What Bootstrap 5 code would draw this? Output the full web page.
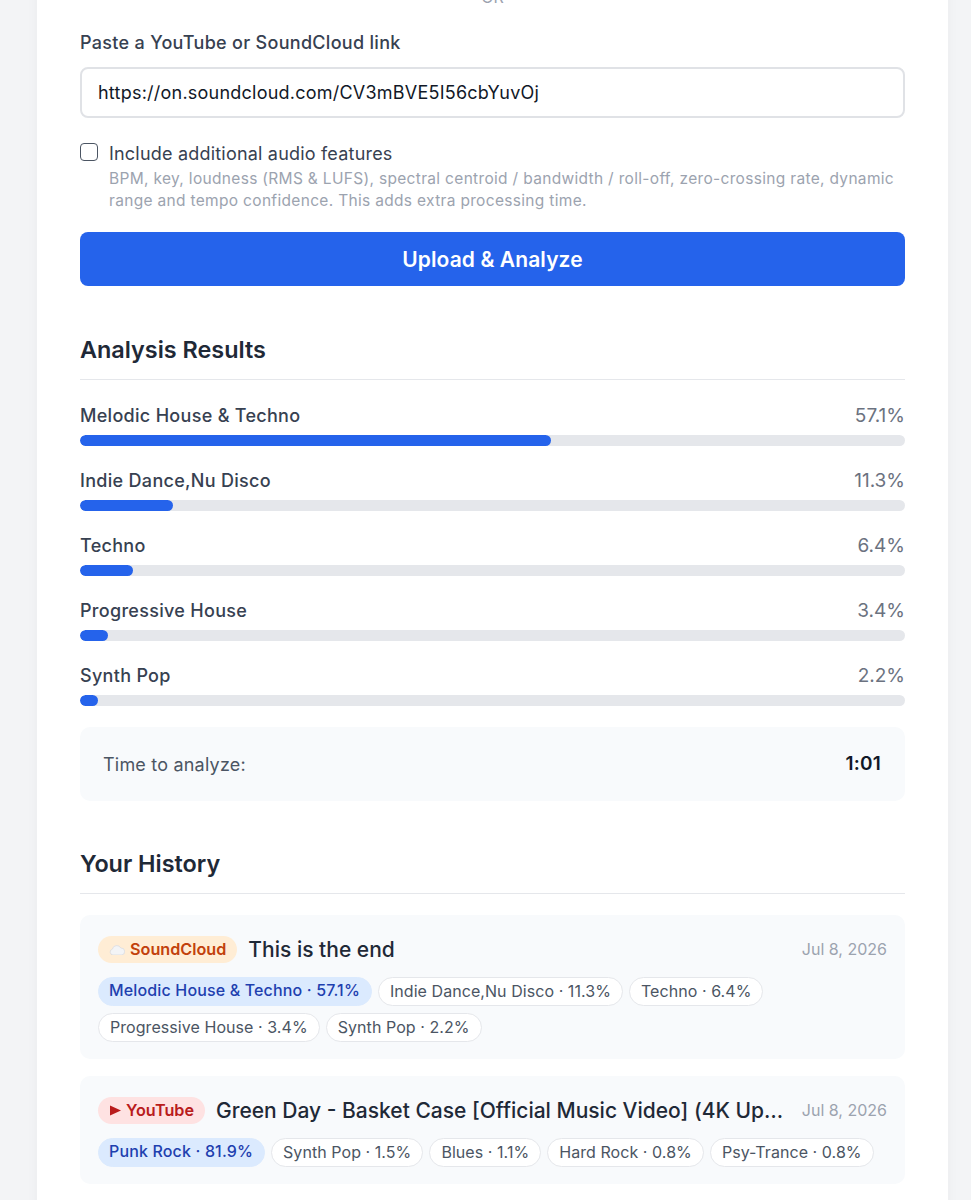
<!DOCTYPE html>
<html lang="en">
  <head>
    <meta charset="UTF-8" />
    <meta name="viewport" content="width=device-width, initial-scale=1.0" />
    <title>Genre Analyzer</title>
    <link href="https://cdn.jsdelivr.net/npm/bootstrap@5.3.0/dist/css/bootstrap.min.css" rel="stylesheet" />
    <style>
      html,
      body {
        height: 1200px;
        overflow: hidden;
      }
      body {
        background: #f3f4f6;
        color: #1f2937;
        font-family: Inter, "Liberation Sans", sans-serif;
      }
      .page-card {
        width: 911px;
        margin: -15px 0 0 37px;
        padding: 0 43px 40px;
        background: #fff;
        box-shadow: 0 0 12px rgba(0, 0, 0, 0.04);
      }
      .or-line {
        height: 24px;
        line-height: 24px;
        font-size: 16px;
        color: #9ca3af;
        text-align: center;
      }
      .link-label {
        display: block;
        margin: 20px 0 10px;
        font-size: 18px;
        line-height: 28px;
        font-weight: 500;
        letter-spacing: 0.3px;
        color: #374151;
      }
      .link-input.form-control {
        height: 51px;
        padding: 0 16px;
        font-size: 18px;
        letter-spacing: 0.23px;
        color: #111827;
        border: 2px solid #e0e2e6;
        border-radius: 8px;
      }
      .audio-check {
        display: flex;
        gap: 11px;
        margin-top: 24px;
      }
      .audio-check .form-check-input {
        flex: none;
        width: 18px;
        height: 18px;
        margin: 1px 0 0;
        border: 1px solid #4b5563;
        border-radius: 4px;
      }
      .audio-title {
        padding-top: 1px;
        font-size: 18px;
        line-height: 22px;
        letter-spacing: 0.2px;
        color: #374151;
      }
      .audio-help {
        margin-top: 3px;
        font-size: 15.5px;
        line-height: 21.5px;
        letter-spacing: 0.32px;
        color: #9ca3af;
      }
      .upload-btn.btn {
        display: block;
        width: 100%;
        height: 54px;
        margin-top: 21px;
        padding-top: 8px;
        background: #2563eb;
        border: 0;
        border-radius: 8px;
        font-size: 21px;
        font-weight: 600;
        letter-spacing: 0.1px;
        color: #fff;
      }
      .block-title {
        margin: 48px 0 0;
        padding-bottom: 15px;
        border-bottom: 1px solid #e5e7eb;
        font-size: 23.4px;
        line-height: 29px;
        font-weight: 600;
        color: #1f2937;
      }
      .first-title {
        margin-top: 49px;
      }
      .genre-row {
        margin-bottom: 23px;
      }
      .genre-head {
        display: flex;
        justify-content: space-between;
        margin-bottom: 7px;
        font-size: 18px;
        line-height: 24px;
      }
      .genre-name {
        font-weight: 500;
        letter-spacing: 0.3px;
        color: #374151;
      }
      .genre-pct {
        font-size: 19px;
        color: #6b7280;
      }
      .genre-bar.progress {
        height: 11px;
        background: #e5e7eb;
        border-radius: 6px;
      }
      .genre-bar .progress-bar {
        background: #2563eb;
        border-radius: 6px;
      }
      .time-box {
        display: flex;
        justify-content: space-between;
        align-items: center;
        height: 74px;
        margin-top: -2px;
        padding: 0 24px 0 23px;
        background: #f8fafc;
        border-radius: 10px;
        font-size: 18px;
        letter-spacing: 0.2px;
        color: #4b5563;
      }
      .time-box b {
        padding-top: 1px;
        font-size: 19px;
        font-weight: 600;
        color: #111827;
      }
      .history-list {
        margin-top: 21px;
      }
      .history-item {
        margin-bottom: 17px;
        padding: 21px 18px 17px;
        background: #f8fafc;
        border-radius: 10px;
      }
      .history-head {
        display: flex;
        align-items: center;
        gap: 11px;
        margin-bottom: 14px;
      }
      .source-pill {
        display: inline-flex;
        align-items: center;
        flex: none;
        gap: 5px;
        height: 27px;
        padding: 0 11px;
        border-radius: 14px;
        font-size: 16.2px;
        font-weight: 600;
      }
      .source-sc {
        background: #ffedd5;
        color: #c2410c;
      }
      .source-yt {
        padding-left: 12px;
        background: #fee2e2;
        color: #b91c1c;
      }
      .history-title {
        flex: 1;
        min-width: 0;
        overflow: hidden;
        white-space: nowrap;
        text-overflow: ellipsis;
        font-size: 21px;
        line-height: 27px;
        font-weight: 500;
        color: #1f2937;
      }
      .history-date {
        flex: none;
        margin-left: 5px;
        font-size: 16px;
        line-height: 27px;
        color: #9ca3af;
      }
      .tag-wrap {
        display: flex;
        flex-wrap: wrap;
        gap: 7px 6px;
      }
      .genre-tag {
        height: 29px;
        padding: 0 11px;
        background: #fff;
        border: 1px solid #e5e7eb;
        border-radius: 15px;
        font-size: 16px;
        letter-spacing: 0.06px;
        line-height: 27px;
        color: #4b5563;
      }
      .genre-tag.tag-top {
        padding: 0 11px 0 10px;
        background: #dbeafe;
        border-color: #dbeafe;
        font-weight: 500;
        letter-spacing: 0.15px;
        color: #1e40af;
        line-height: 25px;
      }
    </style>
  </head>
  <body>
    <div class="page-card">
      <div class="or-line">OR</div>

      <label class="link-label" for="linkInput">Paste a YouTube or SoundCloud link</label>
      <input id="linkInput" class="form-control link-input" type="text" value="https://on.soundcloud.com/CV3mBVE5I56cbYuvOj" />

      <div class="audio-check">
        <input class="form-check-input" type="checkbox" id="extraFeatures" />
        <label for="extraFeatures">
          <div class="audio-title">Include additional audio features</div>
          <div class="audio-help">BPM, key, loudness (RMS &amp; LUFS), spectral centroid / bandwidth / roll-off, zero-crossing rate, dynamic range and tempo confidence. This adds extra processing time.</div>
        </label>
      </div>

      <button class="btn upload-btn" type="button">Upload &amp; Analyze</button>

      <h2 class="block-title first-title">Analysis Results</h2>

      <div id="genres" class="mt-4"></div>

      <div class="time-box"><span>Time to analyze:</span><b>1:01</b></div>

      <h2 class="block-title">Your History</h2>

      <div class="history-list">
        <div class="history-item">
          <div class="history-head">
            <span class="source-pill source-sc">
              <svg width="16" height="10" viewBox="0 0 16 10"><path d="M4 10a3 3 0 0 1-.6-5.9A4.5 4.5 0 0 1 11.8 3 3.5 3.5 0 0 1 12.5 10z" fill="#f3f4f6" stroke="#d1d5db" stroke-width=".6"/></svg>
              SoundCloud
            </span>
            <span class="history-title">This is the end</span>
            <span class="history-date">Jul 8, 2026</span>
          </div>
          <div class="tag-wrap">
            <span class="genre-tag tag-top">Melodic House &amp; Techno · 57.1%</span>
            <span class="genre-tag">Indie Dance,Nu Disco · 11.3%</span>
            <span class="genre-tag">Techno · 6.4%</span>
            <span class="genre-tag">Progressive House · 3.4%</span>
            <span class="genre-tag">Synth Pop · 2.2%</span>
          </div>
        </div>
        <div class="history-item">
          <div class="history-head">
            <span class="source-pill source-yt">
              <svg width="11" height="11" viewBox="0 0 11 11"><path d="M0 0.5 11 5.5 0 10.5z" fill="#b91c1c"/></svg>
              YouTube
            </span>
            <span class="history-title">Green Day - Basket Case [Official Music Video] (4K Upgrade)</span>
            <span class="history-date">Jul 8, 2026</span>
          </div>
          <div class="tag-wrap">
            <span class="genre-tag tag-top">Punk Rock · 81.9%</span>
            <span class="genre-tag">Synth Pop · 1.5%</span>
            <span class="genre-tag">Blues · 1.1%</span>
            <span class="genre-tag">Hard Rock · 0.8%</span>
            <span class="genre-tag">Psy-Trance · 0.8%</span>
          </div>
        </div>
      </div>
    </div>

    <script src="https://cdn.jsdelivr.net/npm/bootstrap@5.3.0/dist/js/bootstrap.bundle.min.js"></script>
    <script>
      var genres = [
        ["Melodic House & Techno", 57.1],
        ["Indie Dance,Nu Disco", 11.3],
        ["Techno", 6.4],
        ["Progressive House", 3.4],
        ["Synth Pop", 2.2],
      ];
      var html = "";
      genres.forEach(function (g) {
        html +=
          '<div class="genre-row"><div class="genre-head"><span class="genre-name">' +
          g[0].replace("&", "&amp;") +
          '</span><span class="genre-pct">' +
          g[1] +
          '%</span></div><div class="progress genre-bar"><div class="progress-bar" style="width: ' +
          g[1] +
          '%"></div></div></div>';
      });
      document.getElementById("genres").innerHTML = html;
    </script>
  </body>
</html>
